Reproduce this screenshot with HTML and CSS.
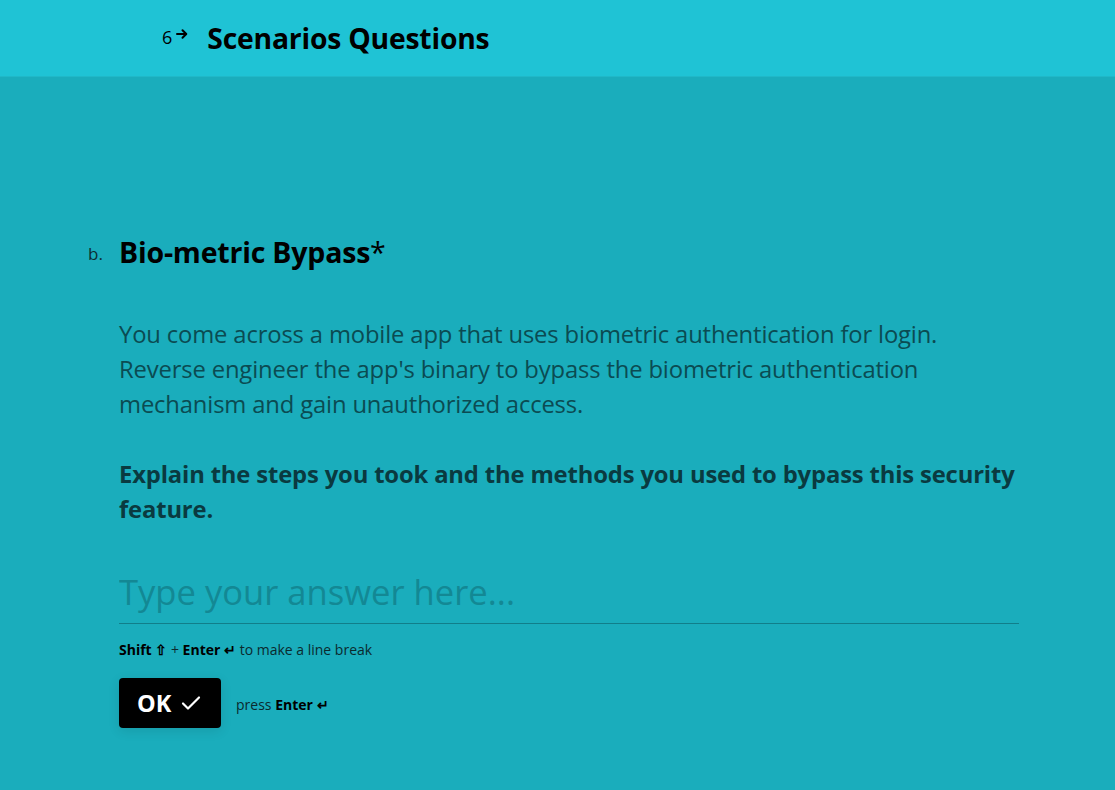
FILE: index.html
```html
<!DOCTYPE html>
<html lang="en">
<head>
<meta charset="utf-8">
<link rel="stylesheet" href="styles.css">
</head>
<body>
<header class="topbar">
  <div class="topbar-inner">
    <span class="sec-num">6</span>
    <svg class="sec-arrow" width="12" height="12" viewBox="0 0 12 12"><path d="M1 6h9M6.5 2.2L10.3 6 6.5 9.8" fill="none" stroke="#000" stroke-width="2" stroke-linecap="round" stroke-linejoin="round"/></svg>
    <h1 class="sec-title">Scenarios Questions</h1>
  </div>
</header>
<main class="content">
  <div class="question">
    <div class="q-label">b.</div>
    <div class="q-body">
      <h2 class="q-title">Bio-metric Bypass<span class="req">*</span></h2>
      <p class="q-desc">You come across a mobile app that uses biometric authentication for login. Reverse engineer the app's binary to bypass the biometric authentication mechanism and gain unauthorized access.</p>
      <p class="q-desc q-strong">Explain the steps you took and the methods you used to bypass this security feature.</p>
      <div class="answer">
        <textarea class="answer-input" rows="1" placeholder="Type your answer here..."></textarea>
      </div>
      <div class="hint"><b>Shift ⇧</b> + <b>Enter ↵</b> to make a line break</div>
      <div class="actions">
        <button class="ok-btn">OK
          <svg width="20" height="16" viewBox="0 0 20 16"><path d="M2 8.5l5 5L18 2.5" fill="none" stroke="#fff" stroke-width="2.2" stroke-linecap="round" stroke-linejoin="round"/></svg>
        </button>
        <span class="press">press <b>Enter ↵</b></span>
      </div>
    </div>
  </div>
</main>
</body>
</html>
```
FILE: styles.css
```css
* { box-sizing: border-box; }
html, body { margin: 0; padding: 0; }
body {
  background: #1aadbc;
  font-family: "Open Sans", "Noto Sans", sans-serif;
  color: #000;
  height: 790px;
  overflow: hidden;
}
.topbar {
  background: #1fc3d5;
  height: 77px;
  border-bottom: 1px solid #20b8c8;
}
.topbar-inner {
  display: flex;
  align-items: center;
  padding-left: 162px;
  height: 76px;
}
.sec-num {
  font-size: 18px;
  line-height: 1;
  margin-top: -2px;
}
.sec-arrow { margin-left: 4px; margin-top: -8px; }
.sec-title {
  margin: 0 0 0 19px;
  font-size: 28.3px;
  font-weight: 700;
  letter-spacing: -0.2px;
}
.content {
  padding-top: 155px;
}
.question {
  display: flex;
  padding-left: 88px;
}
.q-label {
  width: 31px;
  font-size: 17px;
  padding-top: 10px;
  color: #0d2e33;
}
.q-body {
  width: 900px;
}
.q-title {
  margin: 0;
  font-size: 28.5px;
  font-weight: 700;
  line-height: 40px;
  letter-spacing: -0.2px;
}
.req { font-weight: 400; }
.q-desc {
  margin: 45px 0 0;
  font-size: 23.8px;
  line-height: 35px;
  color: #0b4b52;
  letter-spacing: -0.15px;
}
.q-strong {
  font-weight: 700;
  color: #0a3a40;
  margin-top: 35px;
}
.answer {
  margin-top: 40px;
  border-bottom: 1px solid #117e8a;
}
.answer-input {
  display: block;
  width: 100%;
  border: 0;
  outline: none;
  background: transparent;
  resize: none;
  font-family: inherit;
  font-size: 34.6px;
  line-height: 50px;
  height: 56px;
  padding: 0;
  color: #0b4b52;
  overflow: hidden;
}
.answer-input::placeholder { color: #138894; }
.hint {
  margin-top: 16px;
  font-size: 14px;
  color: #0b2a2e;
}
.hint b { color: #000; }
.actions {
  display: flex;
  align-items: center;
  margin-top: 19px;
}
.ok-btn {
  display: flex;
  align-items: center;
  gap: 10px;
  width: 102px;
  height: 50px;
  padding: 0 0 0 18px;
  background: #000;
  color: #fff;
  border: 0;
  border-radius: 4px;
  font-family: inherit;
  font-size: 23.5px;
  font-weight: 700;
  box-shadow: 0 3px 12px rgba(0,0,0,0.1);
}
.press {
  margin-left: 15px;
  font-size: 14px;
  color: #0b2a2e;
  margin-top: 3px;
}
.press b { color: #000; }
```
